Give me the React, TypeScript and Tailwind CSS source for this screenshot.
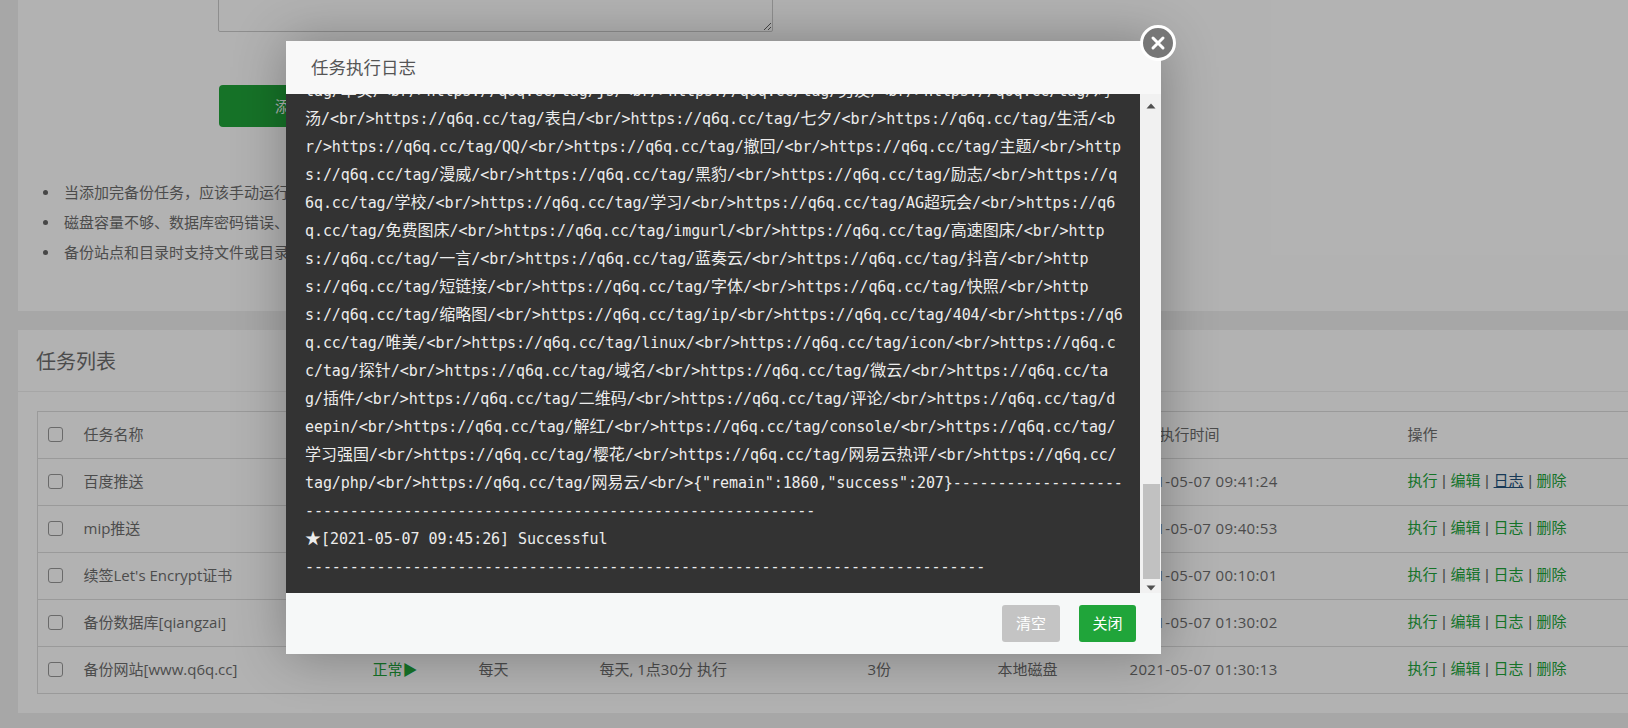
const LOG_LINES = [
  "tag/单页/<br/>https://q6q.cc/tag/js/<br/>https://q6q.cc/tag/男友/<br/>https://q6q.cc/tag/鸡",
  "汤/<br/>https://q6q.cc/tag/表白/<br/>https://q6q.cc/tag/七夕/<br/>https://q6q.cc/tag/生活/<b",
  "r/>https://q6q.cc/tag/QQ/<br/>https://q6q.cc/tag/撤回/<br/>https://q6q.cc/tag/主题/<br/>http",
  "s://q6q.cc/tag/漫威/<br/>https://q6q.cc/tag/黑豹/<br/>https://q6q.cc/tag/励志/<br/>https://q",
  "6q.cc/tag/学校/<br/>https://q6q.cc/tag/学习/<br/>https://q6q.cc/tag/AG超玩会/<br/>https://q6",
  "q.cc/tag/免费图床/<br/>https://q6q.cc/tag/imgurl/<br/>https://q6q.cc/tag/高速图床/<br/>http",
  "s://q6q.cc/tag/一言/<br/>https://q6q.cc/tag/蓝奏云/<br/>https://q6q.cc/tag/抖音/<br/>http",
  "s://q6q.cc/tag/短链接/<br/>https://q6q.cc/tag/字体/<br/>https://q6q.cc/tag/快照/<br/>http",
  "s://q6q.cc/tag/缩略图/<br/>https://q6q.cc/tag/ip/<br/>https://q6q.cc/tag/404/<br/>https://q6",
  "q.cc/tag/唯美/<br/>https://q6q.cc/tag/linux/<br/>https://q6q.cc/tag/icon/<br/>https://q6q.c",
  "c/tag/探针/<br/>https://q6q.cc/tag/域名/<br/>https://q6q.cc/tag/微云/<br/>https://q6q.cc/ta",
  "g/插件/<br/>https://q6q.cc/tag/二维码/<br/>https://q6q.cc/tag/评论/<br/>https://q6q.cc/tag/d",
  "eepin/<br/>https://q6q.cc/tag/解红/<br/>https://q6q.cc/tag/console/<br/>https://q6q.cc/tag/",
  "学习强国/<br/>https://q6q.cc/tag/樱花/<br/>https://q6q.cc/tag/网易云热评/<br/>https://q6q.cc/",
  'tag/php/<br/>https://q6q.cc/tag/网易云/<br/>{"remain":1860,"success":207}' + "-".repeat(19),
  "-".repeat(57),
  "★[2021-05-07 09:45:26] Successful",
  "-".repeat(76),
];

interface Task {
  name: string;
  period: string;
  when: string;
  keep: string;
  storage: string;
  last: string;
}

const TASKS: Task[] = [
  { name: "百度推送", period: "每天", when: "每天, 9点41分 执行", keep: "-", storage: "-", last: "2021-05-07 09:41:24" },
  { name: "mip推送", period: "每天", when: "每天, 9点40分 执行", keep: "-", storage: "-", last: "2021-05-07 09:40:53" },
  { name: "续签Let's Encrypt证书", period: "每天", when: "每天, 0点10分 执行", keep: "-", storage: "-", last: "2021-05-07 00:10:01" },
  { name: "备份数据库[qiangzai]", period: "每天", when: "每天, 1点30分 执行", keep: "3份", storage: "本地磁盘", last: "2021-05-07 01:30:02" },
  { name: "备份网站[www.q6q.cc]", period: "每天", when: "每天, 1点30分 执行", keep: "3份", storage: "本地磁盘", last: "2021-05-07 01:30:13" },
];

const NOTES = [
  "当添加完备份任务，应该手动运行一次，并检查备份包是否完整",
  "磁盘容量不够、数据库密码错误、网络不佳等原因，可能导致数据备份不完整",
  "备份站点和目录时支持文件或目录排除规则",
];

// ascii stays in the mono face, wide glyphs go a size up like the original
function LogLine({ text }: { text: string }) {
  const parts = text.split(/([^\x00-\x7f]+)/);
  return (
    <div className="h-[28px] leading-[28px] whitespace-pre">
      {parts.map((p, i) =>
        i % 2 === 1 ? (
          <span key={i} className="font-['Noto_Sans_CJK_SC',sans-serif] text-[16px] leading-none tracking-normal">{p}</span>
        ) : (
          <span key={i}>{p}</span>
        )
      )}
    </div>
  );
}

function Check() {
  return (
    <input
      type="checkbox"
      className="appearance-none block w-[15px] h-[15px] border border-[#999] rounded-[3px] bg-white"
    />
  );
}

function Sep() {
  return <span className="font-['Liberation_Sans',sans-serif] text-[#666] mx-[0.4px]">{" | "}</span>;
}

function Ops({ hover }: { hover: boolean }) {
  return (
    <span className="text-[#20a53a]">
      <a>执行</a>
      <Sep />
      <a>编辑</a>
      <Sep />
      <a className={hover ? "text-[#23527c] underline" : ""}>日志</a>
      <Sep />
      <a>删除</a>
    </span>
  );
}

function LogScrollbar() {
  return (
    <div className="w-[21px] shrink-0 bg-[#f1f1f1] flex flex-col items-center pl-[1px]">
      <svg width="12" height="8" viewBox="0 0 12 8" className="mt-[8px]">
        <path d="M6 1.5L10.5 6.5H1.5z" fill="#505050" />
      </svg>
      <div className="flex-1" />
      <div className="w-[17px] h-[95px] bg-[#c1c1c1]" />
      <svg width="12" height="8" viewBox="0 0 12 8" className="mt-[5px] mb-[1px]">
        <path d="M6 6.5L10.5 1.5H1.5z" fill="#505050" />
      </svg>
    </div>
  );
}

export default function App() {
  return (
    <div className="relative h-[728px] w-full overflow-hidden bg-[#f0f0f0] font-['Open_Sans','Noto_Sans_CJK_SC',sans-serif] text-[15px] text-[#6e6e6e]">
      <div className="w-[1720px] pl-[18px] flex flex-col gap-[19px]">

        {/* form card */}
        <div className="h-[311px] bg-white overflow-hidden">
          <textarea className="block ml-[200px] -mt-[20px] w-[555px] h-[52px] border border-[#ccc] rounded-[2px] bg-white" />
          <div className="ml-[201px] mt-[53px] w-[172px] h-[42px] rounded-[4px] bg-[#20a53a] text-white flex items-center justify-center">
            添加任务
          </div>
          <ul className="mt-[50px] leading-[30px]">
            {NOTES.map((n) => (
              <li key={n} className="flex items-center">
                <span className="w-[5px] h-[5px] rounded-full bg-[#666] ml-[25px] mr-[16px] shrink-0" />
                {n}
              </li>
            ))}
          </ul>
        </div>

        {/* task list card */}
        <div className="h-[383px] bg-white">
          <div className="h-[62px] border-b border-[#eee] pl-[18px] pt-[3px] flex items-center text-[20px]">任务列表</div>
          <div className="pl-[19px] pt-[19px]">
            <table className="table-fixed w-[1680px] border-collapse border-l border-t border-[#ddd]">
              <colgroup>
                <col className="w-[38px]" />
                <col className="w-[289px]" />
                <col className="w-[106px]" />
                <col className="w-[121px]" />
                <col className="w-[268px]" />
                <col className="w-[130px]" />
                <col className="w-[132px]" />
                <col className="w-[278px]" />
                <col />
              </colgroup>
              <thead>
                <tr className="h-[47px] border-b border-[#ddd] text-left">
                  <th className="pl-[10px] pb-[1px] font-normal"><Check /></th>
                  <th className="pl-[8px] pb-[2px] font-normal">任务名称</th>
                  <th className="pl-[8px] pb-[2px] font-normal">状态</th>
                  <th className="pl-[8px] pb-[2px] font-normal">周期</th>
                  <th className="pl-[8px] pb-[2px] font-normal">执行时间</th>
                  <th className="pl-[8px] pb-[2px] font-normal">保存数量</th>
                  <th className="pl-[8px] pb-[2px] font-normal">备份到</th>
                  <th className="pl-[8px] pb-[2px] font-normal">上次执行时间</th>
                  <th className="pl-[8px] pb-[2px] font-normal">操作</th>
                </tr>
              </thead>
              <tbody>
                {TASKS.map((t, i) => (
                  <tr key={t.name} className="h-[47px] border-b border-[#ddd]">
                    <td className="pl-[10px] pb-[1px]"><Check /></td>
                    <td className="pl-[8px] pb-[2px]">{t.name}</td>
                    <td className="pl-[8px] pb-[2px] text-[#20a53a]">正常▶</td>
                    <td className="pl-[8px] pb-[2px]">{t.period}</td>
                    <td className="pl-[8px] pb-[2px]">{t.when}</td>
                    <td className="pl-[8px] pb-[2px]">{t.keep}</td>
                    <td className="pl-[8px] pb-[2px]">{t.storage}</td>
                    <td className="pl-[8px] pb-[2px] tracking-[0.35px]">{t.last}</td>
                    <td className="pl-[8px] pb-[2px]"><Ops hover={i === 0} /></td>
                  </tr>
                ))}
              </tbody>
            </table>
          </div>
        </div>
      </div>

      {/* shade */}
      <div className="absolute inset-0 bg-black/30" />

      {/* log dialog */}
      <div className="absolute left-[286px] top-[41px] w-[875px] h-[613px] flex flex-col bg-white shadow-[1px_1px_50px_rgba(0,0,0,0.3)]">
        <div className="h-[53px] shrink-0 bg-[#f8f8f8] pl-[25px] flex items-center text-[17.5px] text-[#555]">
          任务执行日志
        </div>
        <div className="flex h-[499px] shrink-0">
          <div className="flex-1 bg-[#333] overflow-hidden pl-[19px] font-['DejaVu_Sans_Mono','Noto_Sans_CJK_SC',monospace] text-[15px] tracking-[-0.08px] text-[#ececec]">
            <div className="-mt-[17px]">
              {LOG_LINES.map((l, i) => (
                <LogLine key={i} text={l} />
              ))}
            </div>
          </div>
          <LogScrollbar />
        </div>
        <div className="flex-1 bg-[#f6f8f8] flex items-center justify-end gap-[19px] pr-[25px]">
          <button className="w-[58px] h-[37px] rounded-[3px] bg-[#c4c4c4] text-white">清空</button>
          <button className="w-[57px] h-[37px] rounded-[3px] bg-[#20a53a] text-white">关闭</button>
        </div>
      </div>

      {/* close button */}
      <button className="absolute left-[1140px] top-[25px] w-[36px] h-[36px] rounded-full border-[3px] border-white bg-[#777] flex items-center justify-center">
        <svg width="16" height="16" viewBox="0 0 16 16">
          <path d="M3 3L13 13M13 3L3 13" stroke="#fff" strokeWidth="3" strokeLinecap="round" />
        </svg>
      </button>
    </div>
  );
}
